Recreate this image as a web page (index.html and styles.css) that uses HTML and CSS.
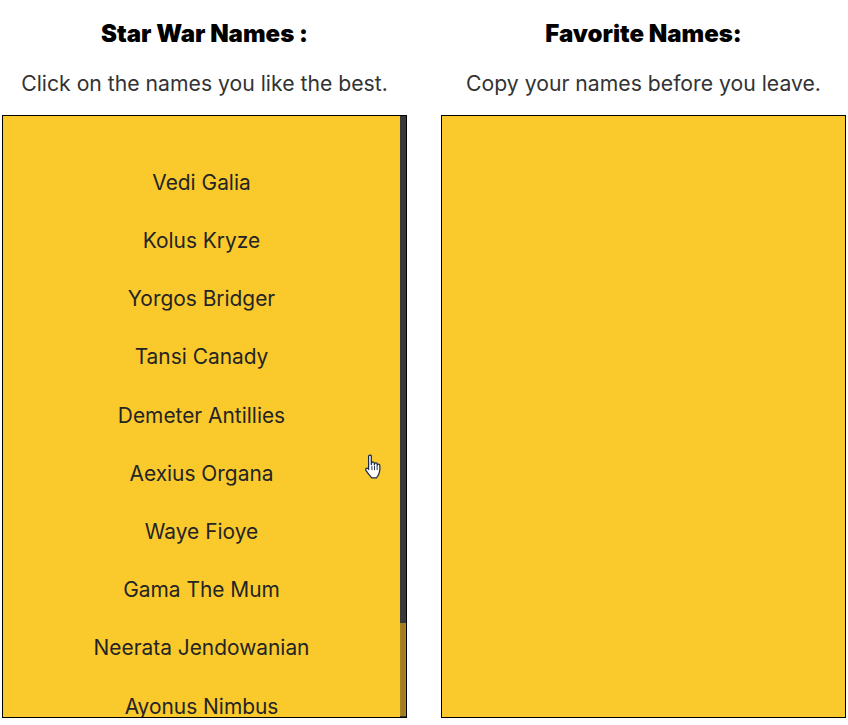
FILE: index.html
```html
<!DOCTYPE html>
<html lang="en">
<head>
<meta charset="utf-8">
<title>Star War Names</title>
<link rel="stylesheet" href="styles.css">
</head>
<body>
<main class="columns">
  <section class="column">
    <h2 class="title">Star War Names :</h2>
    <p class="hint">Click on the names you like the best.</p>
    <div class="panel">
      <ul class="names">
        <li>Vedi Galia</li>
        <li>Kolus Kryze</li>
        <li>Yorgos Bridger</li>
        <li>Tansi Canady</li>
        <li>Demeter Antillies</li>
        <li>Aexius Organa</li>
        <li>Waye Fioye</li>
        <li>Gama The Mum</li>
        <li>Neerata Jendowanian</li>
        <li>Ayonus Nimbus</li>
      </ul>
      <div class="track"><div class="thumb"></div></div>
      <svg class="cursor" width="20" height="27" viewBox="0 0 18 26">
        <path d="M3.800 2.200c0-1.600 2.600-1.600 2.600 0v8l.4-1.900c.7-.9 2.300-.8 2.500.3v1.800l.4-1.400c.7-.8 2.200-.7 2.400.4v1.600l.4-.8c.7-.7 2-.4 2.100.6.300 3.200.2 5.800-.8 8.100-.7 1.600-1.500 2.800-2.500 4.100H6.800C5.300 21.300 3.300 19 1.200 15.800c-.9-1.500.8-3 2.100-1.700l.5.800z" fill="#fff" stroke="#1b2a4a" stroke-width="1.200" stroke-linejoin="round"/>
        <path d="M7 11.500v4M9.500 11.500v4M12 11.500v4" stroke="#1b2a4a" stroke-width=".9" fill="none"/>
      </svg>
    </div>
  </section>
  <section class="column">
    <h2 class="title">Favorite Names:</h2>
    <p class="hint">Copy your names before you leave.</p>
    <div class="panel"></div>
  </section>
</main>
</body>
</html>
```
FILE: styles.css
```css
* { box-sizing: border-box; }
html, body { margin: 0; height: 100%; background: #fff; }
body { font-family: Inter, "Liberation Sans", sans-serif; color: #2b2b2b; overflow: hidden; }
.columns { display: flex; gap: 34px; padding: 0 2px; }
.column { width: 405px; display: flex; flex-direction: column; align-items: center; }
.title { margin: 0; padding-top: 19px; height: 48px; font-weight: 900; font-size: 24px; line-height: 29px; color: #000; white-space: nowrap; }
.hint { margin: 0; padding-top: 22px; height: 67px; font-size: 21.2px; line-height: 27px; color: #333; white-space: nowrap; }
.panel { position: relative; width: 405px; height: 603px; background: #faca2d; border: 1px solid #000; display: flex; overflow: hidden; }
.names { list-style: none; margin: 0; padding: 37.8px 0 0; flex: 1; height: 601px; overflow: hidden; text-align: center; font-size: 20.9px; line-height: 58.2px; color: #242424; }
.track { width: 6px; background: #383838; display: flex; flex-direction: column; justify-content: flex-end; padding-bottom: 1px; }
.thumb { height: 93px; background: linear-gradient(90deg, #a98523, #9d7a22 50%, #a98523); }
.cursor { position: absolute; left: 361px; top: 338px; }
```
